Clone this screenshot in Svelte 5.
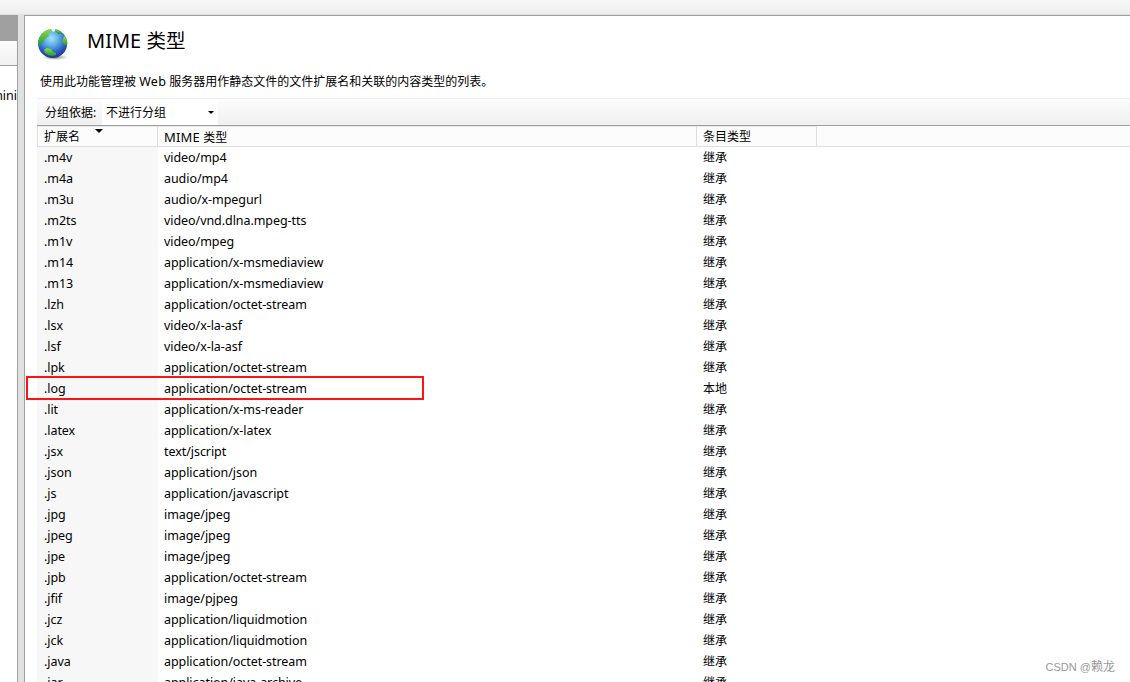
<script lang="ts">
	const inherited = '继承';

	const rows = [
		['.m4v', 'video/mp4'],
		['.m4a', 'audio/mp4'],
		['.m3u', 'audio/x-mpegurl'],
		['.m2ts', 'video/vnd.dlna.mpeg-tts'],
		['.m1v', 'video/mpeg'],
		['.m14', 'application/x-msmediaview'],
		['.m13', 'application/x-msmediaview'],
		['.lzh', 'application/octet-stream'],
		['.lsx', 'video/x-la-asf'],
		['.lsf', 'video/x-la-asf'],
		['.lpk', 'application/octet-stream'],
		['.log', 'application/octet-stream', '本地'],
		['.lit', 'application/x-ms-reader'],
		['.latex', 'application/x-latex'],
		['.jsx', 'text/jscript'],
		['.json', 'application/json'],
		['.js', 'application/javascript'],
		['.jpg', 'image/jpeg'],
		['.jpeg', 'image/jpeg'],
		['.jpe', 'image/jpeg'],
		['.jpb', 'application/octet-stream'],
		['.jfif', 'image/pjpeg'],
		['.jcz', 'application/liquidmotion'],
		['.jck', 'application/liquidmotion'],
		['.java', 'application/octet-stream'],
		['.jar', 'application/java-archive'],
	];
</script>

<div class="window">
	<div class="topbar"></div>
	<div class="body">
		<aside>
			<div class="side-title"></div>
			<div class="side-tools"></div>
			<div class="side-tree"><span>mini</span></div>
		</aside>
		<div class="splitter"></div>
		<main>
			<header>
				<svg class="globe" viewBox="0 0 32 34" width="32" height="34">
					<defs>
						<radialGradient id="sea" cx="0.46" cy="0.32" r="0.68">
							<stop offset="0" stop-color="#a4e6fa" />
							<stop offset="0.4" stop-color="#56a9e3" />
							<stop offset="0.75" stop-color="#2a5cc4" />
							<stop offset="1" stop-color="#1b3590" />
						</radialGradient>
						<linearGradient id="land" x1="0" y1="0" x2="0" y2="1">
							<stop offset="0" stop-color="#90d94b" />
							<stop offset="1" stop-color="#25982e" />
						</linearGradient>
						<radialGradient id="shade">
							<stop offset="0" stop-color="#555" stop-opacity="0.8" />
							<stop offset="1" stop-color="#777" stop-opacity="0" />
						</radialGradient>
						<clipPath id="ball"><circle cx="14.6" cy="15.5" r="14.6" /></clipPath>
					</defs>
					<ellipse cx="17" cy="29.2" rx="13" ry="3" fill="url(#shade)" />
					<circle cx="14.6" cy="15.5" r="14.6" fill="url(#sea)" />
					<g clip-path="url(#ball)" fill="url(#land)">
						<path d="M0 13 3 6 9 1 14 1 13 4 10 5 11 8 8 10 6 12 5 15 3 14 2 18 0 18Z" />
						<path d="M18 0 23 3 24 6 20 6 17 3Z" />
						<path d="M26 8 30 10 30 18 27 17 24 14 25 11Z" />
						<path d="M6 22 9 20 13 21 15 24 18 25 18 27 14 28 10 27 7 25Z" />
					</g>
					<path d="M13 1 17 1 17 3 15 4Z" fill="#e8fbff" />
				</svg>
				<h1>MIME <span>类型</span></h1>
			</header>
			<p class="description">使用此功能管理被 <span class="web">Web</span> 服务器用作静态文件的文件扩展名和关联的内容类型的列表。</p>

			<section>
				<div class="toolbar">
					<span class="label">分组依据:</span>
					<div class="select">
						<span>不进行分组</span>
						<svg width="6" height="3" viewBox="0 0 6 3"><path d="M0 0h6L3 3z" /></svg>
					</div>
				</div>
				<div class="row head">
					<div class="sorted">
						扩展名
						<svg width="8" height="4" viewBox="0 0 8 4"><path d="M0 0h8L4 4z" /></svg>
					</div>
					<div><span class="latin">MIME</span> 类型</div>
					<div>条目类型</div>
				</div>
				{#each rows as [ext, mime, entry]}
					<div class="row" class:marked={ext === '.log'}>
						<div class="ext">{ext}</div>
						<div class="mime">{mime}</div>
						<div class="entry">{entry ?? inherited}</div>
					</div>
				{/each}
			</section>
		</main>
	</div>
	<div class="watermark">CSDN @<span>赖龙</span></div>
</div>

<style>
	:global(body) {
		margin: 0;
		overflow: hidden;
	}

	.window {
		position: relative;
		display: flex;
		flex-direction: column;
		width: 1130px;
		height: 682px;
		overflow: hidden;
		box-sizing: border-box;
		background: #e1e1e1;
		color: #000;
		font: 12px/21px 'Noto Sans', 'Noto Sans CJK SC', sans-serif;
		white-space: nowrap;
	}

	.topbar {
		flex: none;
		height: 14px;
		background: linear-gradient(#f8f8f8, #eee);
		border-bottom: 1px solid #e1e1e1;
	}

	.body {
		display: flex;
		flex: 1;
		min-height: 0;
	}

	aside {
		width: 17px;
		overflow: hidden;
		border-right: 1px solid #a0a0a0;
		background: #fff;
	}

	.side-title {
		height: 26px;
		background: #a0a0a0;
	}

	.side-tools {
		height: 24px;
		background: linear-gradient(#fcfcfc, #f0f0f0);
		border-bottom: 1px solid #a0a0a0;
	}

	.side-tree {
		display: flex;
		justify-content: flex-end;
		padding-top: 19px;
		font-size: 12.5px;
	}

	.splitter {
		width: 6px;
	}

	main {
		flex: 1;
		overflow: hidden;
		border-top: 1px solid #a0a0a0;
		border-left: 1px solid #a0a0a0;
		background: #fff;
	}

	header {
		display: flex;
		height: 54px;
		padding: 12px 0 0 13px;
		box-sizing: border-box;
	}

	h1 {
		margin: 0 0 0 17px;
		font-size: 20px;
		font-weight: 400;
		line-height: 25px;
	}

	h1 span {
		font-size: 19.5px;
	}

	.description {
		margin: 0 0 5px 15px;
		padding-top: 1px;
		line-height: 22px;
	}

	.web {
		font-size: 12.5px;
		letter-spacing: 0.3px;
	}

	.latin {
		font-size: 13px;
		letter-spacing: 0.2px;
	}

	section {
		margin-left: 12px;
	}

	.toolbar {
		display: flex;
		height: 26px;
		border-top: 1px solid #ececec;
		border-bottom: 1px solid #a0a0a0;
		background: linear-gradient(#fdfdfd, #efefef);
		line-height: 27px;
	}

	.label {
		width: 57px;
		padding-left: 8px;
	}

	.select {
		display: flex;
		align-items: center;
		justify-content: space-between;
		width: 108px;
		padding: 0 4px 0 4px;
		background: #fff;
	}

	.row {
		display: grid;
		grid-template-columns: 121px 539px 120px;
		height: 21px;
	}

	.row > div {
		padding-left: 6px;
	}

	.row .ext {
		padding-left: 7px;
		background: #f7f7f7;
	}

	.ext,
	.mime {
		font-size: 12.5px;
		letter-spacing: -0.06px;
	}

	.entry {
		line-height: 22px;
	}

	.head {
		background: #fcfcfc;
		line-height: 20px;
	}

	.head,
	.head > div {
		box-sizing: border-box;
		border-bottom: 1px solid #dedede;
	}

	.head > div {
		height: 21px;
		border-top: 1px solid #e8e8e8;
		border-right: 1px solid #dedede;
	}

	.head .sorted {
		position: relative;
		border-left: 1px solid #dedede;
	}

	.sorted svg {
		position: absolute;
		left: 57px;
		top: 2px;
	}

	.marked {
		position: relative;
	}

	.marked::after {
		content: '';
		position: absolute;
		left: -11px;
		top: -2px;
		width: 394px;
		height: 20px;
		border: 2px solid #fb1512;
	}

	.watermark {
		position: absolute;
		right: 15px;
		bottom: 4px;
		color: #999;
		font-family: 'Liberation Sans', 'Noto Sans CJK SC', sans-serif;
		font-size: 11px;
	}

	.watermark span {
		font-size: 12px;
	}
</style>
